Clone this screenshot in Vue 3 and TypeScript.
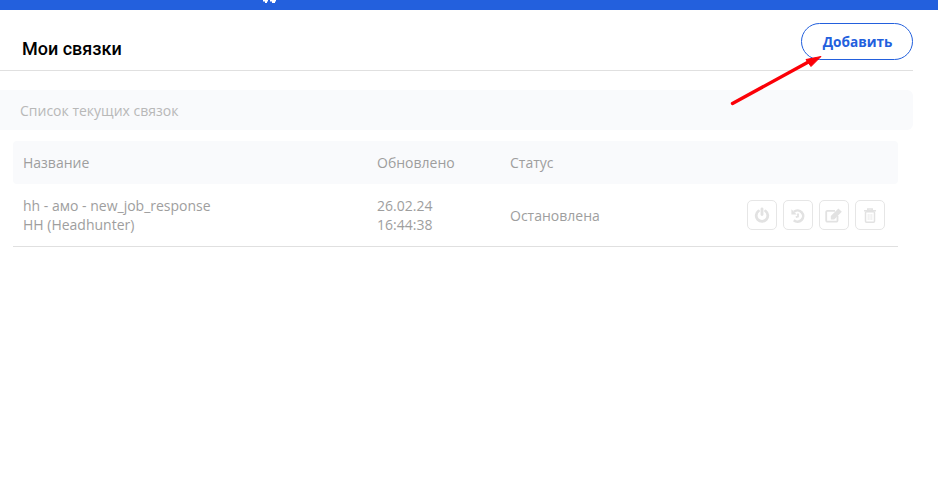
<script setup lang="ts">
interface Binding {
  name: string
  service: string
  date: string
  time: string
  status: string
}

const bindings: Binding[] = [
  {
    name: 'hh - амо - new_job_response',
    service: 'HH (Headhunter)',
    date: '26.02.24',
    time: '16:44:38',
    status: 'Остановлена',
  },
]
</script>

<template>
  <div class="page">
    <div class="topbar">
      <svg class="topbar-mark" width="14" height="4" viewBox="0 0 14 4">
        <path d="M0 0h5v1.500H4V3H2V1.500H0zM7 0h6v1.500h-1V3H9V1.500H7z" fill="#fff" />
      </svg>
    </div>

    <div class="content">
      <header class="head">
        <h1 class="title">Мои связки</h1>
        <button class="add-btn">Добавить</button>
      </header>

      <div class="list-label">Список текущих связок</div>

      <div class="table">
        <div class="row row-head">
          <div class="col-name">Название</div>
          <div class="col-date">Обновлено</div>
          <div class="col-status">Статус</div>
        </div>
        <div v-for="b in bindings" :key="b.name" class="row row-body">
          <div class="col-name">{{ b.name }}<br />{{ b.service }}</div>
          <div class="col-date">{{ b.date }}<br />{{ b.time }}</div>
          <div class="col-status">{{ b.status }}</div>
          <div class="actions">
            <button class="icon-btn" aria-label="Выключить">
              <svg width="16" height="16" viewBox="0 0 16 16" fill="none" stroke="#e2e2e2" stroke-width="2.800" stroke-linecap="round">
                <path d="M8 1.800v5.800" />
                <path d="M4.500 4a5.800 5.800 0 1 0 7 0" />
              </svg>
            </button>
            <button class="icon-btn" aria-label="История">
              <svg width="14" height="15" viewBox="0 0 14 15" fill="none" stroke="#e2e2e2" stroke-width="2.600">
                <path d="M3 3.700A5.600 5.600 0 1 1 2.800 12.200" />
                <path d="M0.400 1.200v5.400h5.400z" fill="#e2e2e2" stroke="none" />
                <path d="M7 5.400v3.200l-2.200 0.600" stroke-width="1.800" />
              </svg>
            </button>
            <button class="icon-btn" aria-label="Изменить">
              <svg width="18" height="15" viewBox="0 0 18 15" fill="none">
                <path d="M12.500 8V12.400a1.200 1.200 0 0 1-1.200 1.200H2.400a1.200 1.200 0 0 1-1.200-1.200V4a1.200 1.200 0 0 1 1.200-1.200h7.600" stroke="#e2e2e2" stroke-width="1.800" />
                <path d="M5.800 8 13.400 0.400l3.400 3.400-7.600 7.600H5.800z" fill="#e2e2e2" />
              </svg>
            </button>
            <button class="icon-btn" aria-label="Удалить">
              <svg width="12" height="15" viewBox="0 0 12 15" fill="none">
                <path d="M0 2.800h12M3.800 2.800V1h4.400v1.800" stroke="#e2e2e2" stroke-width="1.500" />
                <rect x="1.500" y="3.800" width="9" height="10.400" rx="1" stroke="#e2e2e2" stroke-width="1.500" />
                <path d="M4.200 6v6M6 6v6M7.800 6v6" stroke="#ececec" stroke-width="1" />
              </svg>
            </button>
          </div>
        </div>
      </div>
    </div>

    <svg class="arrow" width="938" height="500" viewBox="0 0 938 500">
      <path d="M732.500 103.500 812 60" stroke="#fb0007" stroke-width="3.400" stroke-linecap="round" />
      <path d="M821 56.500 806 59.500 811 66.500z" fill="#fb0007" stroke="#fb0007" stroke-linejoin="round" />
    </svg>
  </div>
</template>

<style scoped>
.page {
  position: relative;
  width: 938px;
  height: 500px;
  overflow: hidden;
  background: #fff;
  font-family: 'Open Sans', sans-serif;
  font-size: 14px;
  color: #9e9e9e;
}

.topbar {
  position: relative;
  height: 10px;
  background: #2360dd;
}

.topbar-mark {
  position: absolute;
  left: 263px;
  top: 0;
}

.content {
  width: 913px;
}

.head {
  display: flex;
  justify-content: space-between;
  box-sizing: border-box;
  height: 61px;
  padding: 13px 0 0 22px;
  border-bottom: 1px solid #e0e0e0;
}

.title {
  margin: 15px 0 0;
  font-family: Roboto, sans-serif;
  font-size: 18px;
  line-height: 22px;
  font-weight: 500;
  color: #000;
}

.add-btn {
  box-sizing: border-box;
  width: 112px;
  height: 37px;
  padding: 0 0 0 1px;
  border: 1px solid #2360dd;
  border-radius: 19px;
  background: #fff;
  color: #2360dd;
  font-family: 'Open Sans', sans-serif;
  font-size: 13.600px;
  font-weight: 700;
  cursor: pointer;
}

.list-label {
  box-sizing: border-box;
  height: 40px;
  margin-top: 19px;
  padding-left: 20px;
  line-height: 41px;
  background: #f9fafc;
  border-radius: 0 6px 6px 0;
  color: #b8b8b8;
}

.table {
  width: 885px;
  margin: 11px 0 0 13px;
}

.row {
  display: flex;
  align-items: center;
  padding-left: 10px;
}

.row-head {
  height: 43px;
  background: #f9fafc;
  border-radius: 4px;
}

.row-body {
  height: 63px;
  line-height: 19px;
  border-bottom: 1px solid #e0e0e0;
  box-sizing: border-box;
}

.col-name {
  width: 354px;
}

.col-date {
  width: 133px;
}

.col-status {
  flex: 1;
}

.actions {
  display: flex;
  gap: 6px;
  padding-right: 13px;
}

.icon-btn {
  display: flex;
  align-items: center;
  justify-content: center;
  box-sizing: border-box;
  width: 30px;
  height: 30px;
  padding: 0;
  border: 1px solid #e6e6e6;
  border-radius: 5px;
  background: #fff;
}

.arrow {
  position: absolute;
  inset: 0;
  pointer-events: none;
}
</style>
